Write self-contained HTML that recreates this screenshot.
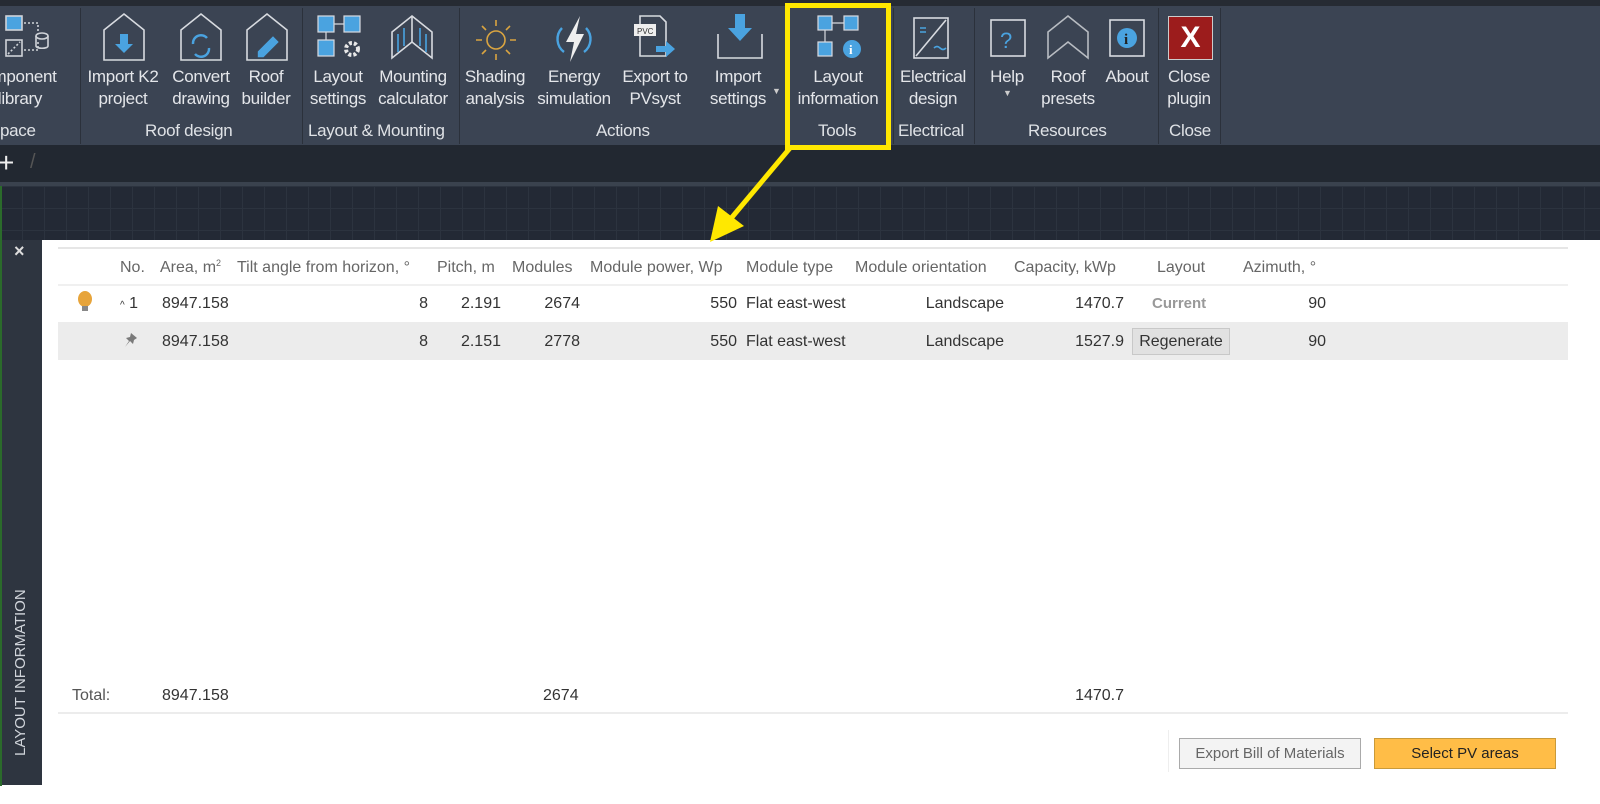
<!DOCTYPE html>
<html><head><meta charset="utf-8"><style>
*{margin:0;padding:0;box-sizing:border-box}
body{width:1600px;height:804px;position:relative;overflow:hidden;background:#fff;font-family:"Liberation Sans",sans-serif}
.a{position:absolute;white-space:nowrap}
.rb{color:#e4e6ea;font-size:17px;text-align:center;line-height:22px;letter-spacing:-0.3px}
.g{color:#dfe2e6;font-size:17px;letter-spacing:-0.3px}
.t{font-size:16px;color:#333;line-height:18px}
.h{color:#666}
.sep{position:absolute;top:8px;width:1px;height:136px;background:#2b313b}
sup{font-size:9px;line-height:0;vertical-align:6px}
</style></head><body>
<div class="a" style="left:0;top:0;width:1600px;height:6px;background:#262b33"></div>
<div class="a" style="left:0;top:6px;width:1600px;height:139px;background:#3b4453"></div>
<div class="sep" style="left:80px"></div><div class="sep" style="left:302px"></div><div class="sep" style="left:459px"></div>
<div class="sep" style="left:893px"></div><div class="sep" style="left:974px"></div><div class="sep" style="left:1158px"></div>
<div class="sep" style="left:1220px"></div>

<svg class="a" style="left:0;top:12px" width="1240" height="56" viewBox="0 0 1240 56" fill="none" stroke-width="1.6">
<g stroke="#cfd3d8"><rect x="6" y="4" width="16" height="14" fill="#4aa3e0" stroke="#cfd3d8"/><rect x="6" y="28" width="16" height="16"/><path d="M8 42L20 30M24 11h14v10M24 38h14v-8" stroke-dasharray="2 2"/><ellipse cx="42" cy="24" rx="6" ry="3"/><path d="M36 24v10c0 3 12 3 12 0V24"/></g>
<g stroke="#d8dbe0"><path d="M104 18L124 2L144 18V48H104Z"/><path d="M181 18L201 2L221 18V48H181Z"/><path d="M247 18L267 2L287 18V48H247Z"/></g>
<path d="M120 22h8v10h5l-9 9-9-9h5z" fill="#4aa3e0"/>
<g stroke="#4aa3e0" stroke-width="2.4"><path d="M193 32a8 8 0 0 1 14-6M209 36a8 8 0 0 1-14 6"/><path d="M259 40l14-14 4 4-14 14h-4z" fill="#4aa3e0"/></g>
<g stroke="#d8dbe0" stroke-width="1.2"><rect x="318" y="4" width="16" height="16" fill="#4aa3e0"/><rect x="344" y="4" width="16" height="16" fill="#4aa3e0"/><rect x="318" y="28" width="16" height="16" fill="#4aa3e0"/><path d="M334 12h10M326 20v8"/></g>
<circle cx="352" cy="37" r="6" fill="none" stroke="#e8e8e8" stroke-width="4" stroke-dasharray="3 2"/>
<g stroke="#d8dbe0"><path d="M392 20L412 4L432 20V46L412 30L392 46Z"/><path d="M412 4V30"/><path d="M398 22v18M404 16v18M420 16v18M426 22v18" stroke="#4aa3e0"/></g>
<g stroke="#d9a441"><circle cx="496" cy="28" r="9"/><path d="M496 8v6M496 42v6M476 28h6M510 28h6M482 14l4 4M510 14l-4 4M482 42l4-4M510 42l-4-4"/></g>
<g stroke="#4aa3e0" stroke-width="2.4"><path d="M562 16a16 16 0 0 0 2 24M586 16a16 16 0 0 1-2 24"/></g>
<path d="M580 4l-14 26h8l-4 20 14-28h-8z" fill="#eee"/>
<g stroke="#d8dbe0"><path d="M640 4h20l6 6v34h-26z"/></g><rect x="634" y="12" width="22" height="12" fill="#eee"/><text x="637" y="22" font-size="8" fill="#333" font-family="Liberation Sans" stroke="none">PVC</text>
<path d="M656 34h10v-5l9 8-9 8v-5h-10z" fill="#4aa3e0"/>
<path d="M718 22v24h44V22" stroke="#d8dbe0"/><path d="M735 2h10v14h7l-12 13-12-13h7z" fill="#4aa3e0"/>
<g stroke="#d8dbe0" stroke-width="1.2"><rect x="818" y="4" width="14" height="14" fill="#4aa3e0"/><rect x="844" y="4" width="14" height="14" fill="#4aa3e0"/><rect x="818" y="30" width="14" height="14" fill="#4aa3e0"/><path d="M832 11h12M825 18v12"/></g>
<circle cx="852" cy="37" r="9" fill="#4aa3e0"/><text x="849" y="42" font-size="13" font-weight="bold" fill="#fff" font-family="Liberation Serif" stroke="none">i</text>
<g stroke="#d8dbe0"><rect x="914" y="6" width="34" height="40"/><path d="M916 44L946 8"/></g><path d="M920 16h6M920 20h6" stroke="#4aa3e0"/><path d="M934 36q3-3 6 0t6 0" stroke="#4aa3e0"/>
<rect x="991" y="8" width="34" height="36" stroke="#d8dbe0"/><text x="1000" y="36" font-size="22" fill="#4aa3e0" font-family="Liberation Sans" stroke="none">?</text>
<path d="M1048 20l20-16 20 16v26l-20-16-20 16z" stroke="#b8bcc2"/>
<rect x="1110" y="8" width="34" height="36" stroke="#d8dbe0"/><circle cx="1127" cy="26" r="10" fill="#4aa3e0"/><text x="1124" y="32" font-size="15" font-weight="bold" fill="#222" font-family="Liberation Serif" stroke="none">i</text>
</svg>
<div class="a" style="left:1168px;top:16px;width:45px;height:44px;background:#9c1c1c;border:1px solid #ccc;color:#fff;font-size:30px;font-weight:bold;text-align:center;line-height:42px">X</div>

<div class="a rb" style="left:-30px;width:100px;top:66px">omponent<br>library</div>
<div class="a rb" style="left:83px;width:80px;top:66px">Import K2<br>project</div>
<div class="a rb" style="left:166px;width:70px;top:66px">Convert<br>drawing</div>
<div class="a rb" style="left:236px;width:60px;top:66px">Roof<br>builder</div>
<div class="a rb" style="left:303px;width:70px;top:66px">Layout<br>settings</div>
<div class="a rb" style="left:373px;width:80px;top:66px">Mounting<br>calculator</div>
<div class="a rb" style="left:460px;width:70px;top:66px">Shading<br>analysis</div>
<div class="a rb" style="left:532px;width:84px;top:66px">Energy<br>simulation</div>
<div class="a rb" style="left:615px;width:80px;top:66px">Export to<br>PVsyst</div>
<div class="a rb" style="left:703px;width:70px;top:66px">Import<br>settings</div>
<div class="a" style="left:772px;top:86px;color:#ccc;font-size:9px">▼</div>
<div class="a rb" style="left:790px;width:96px;top:66px">Layout<br>information</div>
<div class="a rb" style="left:893px;width:80px;top:66px">Electrical<br>design</div>
<div class="a rb" style="left:982px;width:50px;top:66px">Help</div>
<div class="a" style="left:1003px;top:88px;color:#ccc;font-size:9px">▼</div>
<div class="a rb" style="left:1038px;width:60px;top:66px">Roof<br>presets</div>
<div class="a rb" style="left:1100px;width:54px;top:66px">About</div>
<div class="a rb" style="left:1159px;width:60px;top:66px">Close<br>plugin</div>

<div class="a g" style="left:0;top:121px">pace</div>
<div class="a g" style="left:145px;top:121px">Roof design</div>
<div class="a g" style="left:308px;top:121px">Layout &amp; Mounting</div>
<div class="a g" style="left:596px;top:121px">Actions</div>
<div class="a g" style="left:818px;top:121px">Tools</div>
<div class="a g" style="left:898px;top:121px">Electrical</div>
<div class="a g" style="left:1028px;top:121px">Resources</div>
<div class="a g" style="left:1169px;top:121px">Close</div>

<div class="a" style="left:0;top:145px;width:1600px;height:37px;background:#222831"></div>
<div class="a" style="left:-2px;top:146px;color:#eee;font-size:28px;line-height:34px">+</div>
<div class="a" style="left:30px;top:151px;color:#555;font-size:20px">/</div>
<div class="a" style="left:0;top:182px;width:1600px;height:4px;background:#3a424e"></div>
<div class="a" style="left:0;top:186px;width:1600px;height:54px;background-color:#232935;background-image:linear-gradient(#2c333f 1px,transparent 1px),linear-gradient(90deg,#2c333f 1px,transparent 1px);background-size:22px 22px"></div>
<div class="a" style="left:0;top:186px;width:2px;height:600px;background:#2b6b2b"></div>

<div class="a" style="left:2px;top:240px;width:40px;height:545px;background:#2e3540"></div>
<div class="a" style="left:14px;top:241px;color:#ddd;font-size:18px;font-weight:bold">×</div>
<div class="a" style="left:12px;top:756px;color:#d0d4da;font-size:15px;transform:rotate(-90deg);transform-origin:0 0">LAYOUT INFORMATION</div>
<div class="a" style="left:42px;top:240px;width:1526px;height:545px;background:#fff"></div>
<div class="a" style="left:58px;top:247px;width:1510px;height:2px;background:#e6e6e6"></div>
<div class="a" style="left:58px;top:284px;width:1510px;height:2px;background:#f0f0f0"></div>
<div class="a" style="left:58px;top:322px;width:1510px;height:38px;background:#ececec"></div>
<div class="a" style="left:58px;top:712px;width:1510px;height:2px;background:#ececec"></div>

<div class="a t h" style="left:120px;top:259px">No.</div>
<div class="a t h" style="left:160px;top:259px">Area, m<sup>2</sup></div>
<div class="a t h" style="left:237px;top:259px">Tilt angle from horizon, °</div>
<div class="a t h" style="left:437px;top:259px">Pitch, m</div>
<div class="a t h" style="left:512px;top:259px">Modules</div>
<div class="a t h" style="left:590px;top:259px">Module power, Wp</div>
<div class="a t h" style="left:746px;top:259px">Module type</div>
<div class="a t h" style="left:855px;top:259px">Module orientation</div>
<div class="a t h" style="left:1014px;top:259px">Capacity, kWp</div>
<div class="a t h" style="left:1157px;top:259px">Layout</div>
<div class="a t h" style="left:1243px;top:259px">Azimuth, °</div>

<svg class="a" style="left:76px;top:291px" width="18" height="22"><ellipse cx="9" cy="8" rx="7" ry="8" fill="#e7a43a"/><rect x="6" y="15" width="6" height="5" fill="#888"/></svg>
<div class="a t" style="left:120px;top:295px"><span style="font-size:10px">^</span> 1</div>
<div class="a t" style="left:162px;top:295px">8947.158</div>
<div class="a t" style="right:1172px;top:295px">8</div>
<div class="a t" style="right:1099px;top:295px">2.191</div>
<div class="a t" style="right:1020px;top:295px">2674</div>
<div class="a t" style="right:863px;top:295px">550</div>
<div class="a t" style="left:746px;top:295px">Flat east-west</div>
<div class="a t" style="right:596px;top:295px">Landscape</div>
<div class="a t" style="right:476px;top:295px">1470.7</div>
<div class="a t" style="left:1152px;top:295px;color:#999;font-weight:bold;font-size:15px">Current</div>
<div class="a t" style="right:274px;top:295px">90</div>

<svg class="a" style="left:123px;top:332px" width="16" height="18"><path d="M8 1l6 5-3 2-1 4-3-3-5 6 4-6-3-3 4-1z" fill="#7a7a7a"/></svg>
<div class="a t" style="left:162px;top:333px">8947.158</div>
<div class="a t" style="right:1172px;top:333px">8</div>
<div class="a t" style="right:1099px;top:333px">2.151</div>
<div class="a t" style="right:1020px;top:333px">2778</div>
<div class="a t" style="right:863px;top:333px">550</div>
<div class="a t" style="left:746px;top:333px">Flat east-west</div>
<div class="a t" style="right:596px;top:333px">Landscape</div>
<div class="a t" style="right:476px;top:333px">1527.9</div>
<div class="a t" style="left:1132px;top:328px;width:98px;height:27px;background:#e1e1e1;border:1px solid #c8c8c8;text-align:center;line-height:25px">Regenerate</div>
<div class="a t" style="right:274px;top:333px">90</div>

<div class="a t" style="left:72px;top:687px;color:#555">Total:</div>
<div class="a t" style="left:162px;top:687px">8947.158</div>
<div class="a t" style="left:543px;top:687px">2674</div>
<div class="a t" style="right:476px;top:687px">1470.7</div>

<div class="a" style="left:1168px;top:730px;width:1px;height:42px;background:#eee"></div>
<div class="a" style="left:1179px;top:738px;width:182px;height:31px;background:#f3f3f3;border:1px solid #aaa;color:#666;font-size:15px;text-align:center;line-height:29px">Export Bill of Materials</div>
<div class="a" style="left:1374px;top:738px;width:182px;height:31px;background:#ffbd47;border:1px solid #c99a3a;color:#222;font-size:15px;text-align:center;line-height:29px">Select PV areas</div>

<svg class="a" style="left:0;top:0" width="1600" height="804">
<rect x="787.5" y="5.5" width="101" height="142" fill="none" stroke="#ffe800" stroke-width="5"/>
<path d="M790 148L728 222" stroke="#ffe800" stroke-width="5"/>
<path d="M710 242L718 206L744 226Z" fill="#ffe800"/>
</svg>
</body></html>
